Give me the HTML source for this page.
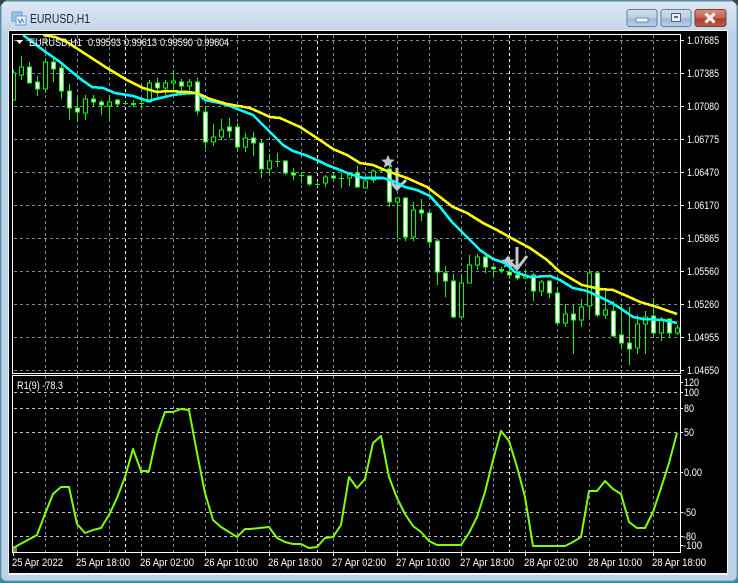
<!DOCTYPE html>
<html><head><meta charset="utf-8"><style>
html,body{margin:0;padding:0;background:#2f8c9c;width:738px;height:583px;overflow:hidden}
svg{display:block}
text{font-family:"Liberation Sans",sans-serif;font-size:11px;fill:#fff}
</style></head><body>
<svg width="738" height="583" viewBox="0 0 738 583" xmlns="http://www.w3.org/2000/svg">
<defs>
<linearGradient id="tb" x1="0" y1="0" x2="0" y2="1"><stop offset="0" stop-color="#dbe7f2"/><stop offset="1" stop-color="#c4d8eb"/></linearGradient>
<linearGradient id="bb" x1="0" y1="0" x2="0" y2="1"><stop offset="0" stop-color="#d5e2ee"/><stop offset=".5" stop-color="#b8cde2"/><stop offset=".55" stop-color="#9db9d6"/><stop offset="1" stop-color="#b7d0e6"/></linearGradient>
<linearGradient id="cb" x1="0" y1="0" x2="0" y2="1"><stop offset="0" stop-color="#d98f80"/><stop offset=".5" stop-color="#c4604f"/><stop offset=".55" stop-color="#ad3a2c"/><stop offset="1" stop-color="#bb5a48"/></linearGradient>
<clipPath id="cm"><rect x="13" y="35" width="667" height="338"/></clipPath>
<clipPath id="ci"><rect x="13" y="376" width="667" height="176"/></clipPath>
</defs>
<rect x="1" y="1" width="736" height="580" rx="5" fill="#b9d2e9" stroke="#7f95a8"/>
<rect x="2" y="2" width="734" height="29" fill="url(#tb)"/>
<path d="M0 0h6L0 6zM738 0h-6l6 6z" fill="#39424a"/>
<!-- icon -->
<rect x="12" y="12" width="10" height="9" fill="#9fc3e8" stroke="#6d9bd0"/>
<rect x="16" y="16" width="10" height="9" fill="#eaf2fb" stroke="#6d9bd0"/>
<path d="M18 19l2 4 2-4 2 4" fill="none" stroke="#4f7fb8"/>
<text x="30" y="23" textLength="60" lengthAdjust="spacingAndGlyphs" style="font-size:13px;fill:#1b2733">EURUSD,H1</text>
<!-- buttons -->
<rect x="627" y="9.5" width="30" height="17" rx="2.5" fill="url(#bb)" stroke="#64809c"/>
<rect x="636" y="18" width="12" height="4" fill="#f2f5f8" stroke="#5b6f84" stroke-width=".7"/>
<rect x="661" y="9.5" width="30" height="17" rx="2.5" fill="url(#bb)" stroke="#64809c"/>
<rect x="671.5" y="13.5" width="9" height="8" fill="#e8eef4" stroke="#4e6176"/>
<rect x="674" y="16" width="4" height="2" fill="#5d7086"/>
<rect x="695" y="9.5" width="31" height="17" rx="2.5" fill="url(#cb)" stroke="#7a3a38"/>
<path d="M705.5 13.5l9 9M714.5 13.5l-9 9" stroke="#f4eeee" stroke-width="3.2"/>
<!-- client -->
<rect x="8" y="30" width="720" height="545" fill="#f3f7fb"/>
<rect x="9" y="31" width="718" height="542" fill="#000"/>
<!-- grid -->
<g shape-rendering="crispEdges" fill="none">
<path stroke="#778899" stroke-dasharray="3 3" d="M14 40.5H680M14 73.5H680M14 106.5H680M14 139.5H680M14 172.5H680M14 205.5H680M14 238.5H680M14 271.5H680M14 304.5H680M14 337.5H680M14 370.5H680"/>
<path stroke="#778899" stroke-dasharray="3 3" d="M45.5 35V373M77.5 35V373M109.5 35V373M141.5 35V373M173.5 35V373M205.5 35V373M237.5 35V373M269.5 35V373M301.5 35V373M333.5 35V373M365.5 35V373M397.5 35V373M429.5 35V373M461.5 35V373M493.5 35V373M525.5 35V373M557.5 35V373M589.5 35V373M621.5 35V373M653.5 35V373M45.5 376V552M77.5 376V552M109.5 376V552M141.5 376V552M173.5 376V552M205.5 376V552M237.5 376V552M269.5 376V552M301.5 376V552M333.5 376V552M365.5 376V552M397.5 376V552M429.5 376V552M461.5 376V552M493.5 376V552M525.5 376V552M557.5 376V552M589.5 376V552M621.5 376V552M653.5 376V552"/>
<path stroke="#ffffff" stroke-dasharray="3 3" d="M125.5 35V373M317.5 35V373M509.5 35V373M125.5 376V552M317.5 376V552M509.5 376V552"/>
<path stroke="#c0c0c0" stroke-dasharray="3 3" d="M14 392.5H680M14 408.5H680M14 432.5H680M14 472.5H680M14 512.5H680M14 536.5H680"/>
</g>
<!-- objects -->
<g fill="#c4c8cc">
<polygon points="388,155 389.9,159.4 394.7,159.8 391,163 392.1,167.7 388,165.2 383.9,167.7 385,163 381.3,159.8 386.1,159.4"/>
<polygon transform="translate(120,100)" points="388,155 389.9,159.4 394.7,159.8 391,163 392.1,167.7 388,165.2 383.9,167.7 385,163 381.3,159.8 386.1,159.4"/>
</g>
<g fill="none" stroke="#c2c8ce" stroke-width="3">
<path d="M397 168V188M390 181L397 189L406 180"/>
<path d="M517 247V268M506 258L517 269L527 256"/>
</g>
<!-- candles -->
<g clip-path="url(#cm)" shape-rendering="crispEdges">
<path fill="none" stroke="#00ff00" d="M13.5 70V100M21.5 56V80M29.5 62V83M37.5 76V96M45.5 58V93M53.5 58V82M61.5 65V99M69.5 84V120M77.5 95V122M85.5 95V120M93.5 95V107M101.5 100V115M109.5 95V120M117.5 99V107M125.5 102V105M133.5 100V107M141.5 100V108M149.5 80V103M157.5 78V97M165.5 80V95M173.5 70V90M181.5 79V90M189.5 79V95M197.5 78V115M205.5 106V148M213.5 124V146M221.5 119V140M229.5 118V138M237.5 123V151M245.5 133V152M253.5 132V156M261.5 140V178M269.5 154V173M277.5 153V167M285.5 160V175M293.5 168V180M301.5 172V183M309.5 176V186M317.5 183V187M325.5 175V187M333.5 172V180M341.5 173V188M349.5 172V186M357.5 166V188M365.5 178V188M373.5 169V183M381.5 167V173M389.5 165V207M397.5 198V238M405.5 197V241M413.5 202V241M421.5 199V221M429.5 212V247M437.5 239V285M445.5 266V297M453.5 274V318M461.5 274V318M469.5 255V283M477.5 254V270M485.5 255V273M493.5 267V277M501.5 267V273M509.5 267V279M517.5 272V280M525.5 270V279M533.5 273V301M541.5 280V296M549.5 280V298M557.5 287V323M565.5 304V327M573.5 305V354M581.5 299V327M589.5 272V319M597.5 272V317M605.5 289V319M613.5 301V337M621.5 304V348M629.5 307V365M637.5 315V354M645.5 311V354M653.5 298V337M661.5 317V341M669.5 318V337M677.5 325V335"/>
<path fill="none" stroke="#00ff00" d="M123 103.5h5M139 103.5h5M275 161.5h5M299 175.5h5M315 184.5h5M339 178.5h5M379 170.5h5M131 103.5h5M131 104.5h5M499 270.5h5M499 269.5h5"/>
<path fill="#fff" stroke="#00ff00" d="M27.5 67h4v16h-4zM35.5 82h4v7h-4zM51.5 62h4v7h-4zM59.5 68h4v23h-4zM67.5 91h4v17h-4zM75.5 108h4v4h-4zM91.5 99h4v3h-4zM99.5 102h4v3h-4zM115.5 100h4v4h-4zM155.5 83h4v5h-4zM179.5 82h4v4h-4zM195.5 82h4v29h-4zM203.5 112h4v30h-4zM227.5 127h4v4h-4zM235.5 127h4v20h-4zM251.5 138h4v5h-4zM259.5 143h4v26h-4zM283.5 161h4v12h-4zM291.5 173h4v2h-4zM307.5 176h4v8h-4zM331.5 176h4v2h-4zM355.5 173h4v14h-4zM387.5 169h4v33h-4zM403.5 198h4v39h-4zM419.5 210h4v3h-4zM427.5 213h4v29h-4zM435.5 241h4v31h-4zM443.5 273h4v8h-4zM451.5 281h4v36h-4zM483.5 257h4v10h-4zM491.5 267h4v2h-4zM507.5 272h4v3h-4zM515.5 275h4v3h-4zM531.5 275h4v16h-4zM547.5 281h4v12h-4zM555.5 293h4v30h-4zM571.5 314h4v6h-4zM595.5 273h4v42h-4zM611.5 311h4v25h-4zM619.5 335h4v8h-4zM627.5 343h4v6h-4zM651.5 316h4v17h-4zM667.5 319h4v14h-4z"/>
<path fill="#000" stroke="#00ff00" d="M11.5 73h4v27h-4zM19.5 67h4v8h-4zM43.5 62h4v27h-4zM83.5 99h4v14h-4zM107.5 102h4v4h-4zM147.5 83h4v19h-4zM163.5 83h4v5h-4zM171.5 81h4v2h-4zM187.5 82h4v4h-4zM211.5 137h4v5h-4zM219.5 130h4v7h-4zM243.5 138h4v9h-4zM267.5 161h4v8h-4zM323.5 177h4v6h-4zM347.5 175h4v3h-4zM363.5 181h4v7h-4zM371.5 171h4v9h-4zM395.5 198h4v4h-4zM411.5 210h4v27h-4zM459.5 283h4v34h-4zM467.5 265h4v18h-4zM475.5 257h4v8h-4zM523.5 276h4v2h-4zM539.5 282h4v9h-4zM563.5 314h4v9h-4zM579.5 307h4v13h-4zM587.5 273h4v33h-4zM603.5 310h4v5h-4zM635.5 324h4v24h-4zM643.5 317h4v7h-4zM659.5 320h4v13h-4zM675.5 328h4v5h-4z"/>
</g>
<!-- MAs -->
<g clip-path="url(#cm)" fill="none" stroke-width="2.6" stroke-linejoin="round" shape-rendering="crispEdges">
<polyline stroke="#00ffff" points="23,35 43,50 60,62 72,72 82,80 92,87 103,88 115,93 133,96 148,101 160,98 173,95 190,93 197,93 205,100 220,103 230,106 240,110 253,115 263,125 273,135 283,145 293,151 305,155 317,160 327,165 340,170 350,174 363,178 383,178 393,181 405,187 417,190 430,196 440,207 452,222 467,237 480,250 493,259 505,263 515,272 530,277 550,276 560,280 573,288 587,291 600,297 610,302 620,308 633,317 643,319 663,320 677,323"/>
<polyline stroke="#ffff00" points="43,35 55,37 67,42 87,55 107,68 127,80 143,88 157,92 167,91 187,92 197,93 210,99 227,104 250,108 270,117 280,118 300,127 317,138 333,149 347,155 360,163 373,165 387,171 407,178 427,187 440,197 453,207 467,213 483,223 497,230 513,239 530,248 547,260 560,272 582,285 600,289 613,290 627,296 640,302 657,307 677,314"/>
</g>
<!-- indicator line -->
<polyline clip-path="url(#ci)" fill="none" stroke="#7fff00" stroke-width="2" stroke-linejoin="round" points="13,548 37,535 45,514 53,494 61,487 69,487 77,524 85,533 93,530 101,528 109,515 117,498 125,477 133,449 141,471 149,471 157,435 165,412 173,412 181,409 189,410 197,453 205,493 213,520 221,527 229,532 237,537 245,529 250,529 269,527 277,538 285,542 293,544 301,544 309,548 317,547 325,538 333,537 341,525 349,477 357,488 365,479 373,443 381,436 389,477 397,498 405,514 413,526 421,532 429,541 437,545 461,545 469,533 477,517 485,492 493,460 501,431 509,441 517,467 525,497 533,546 565,546 573,542 581,537 589,491 597,491 605,481 613,489 621,494 629,522 637,528 645,528 653,512 661,488 669,463 677,433"/>
<path d="M13 549l4-2v5h-4z" fill="#808080"/>
<!-- frames -->
<g shape-rendering="crispEdges" fill="none" stroke="#fff">
<rect x="12.5" y="34.5" width="668" height="339"/>
<rect x="12.5" y="375.5" width="668" height="177"/>
<path d="M681 40.5h3M681 73.5h3M681 106.5h3M681 139.5h3M681 172.5h3M681 205.5h3M681 238.5h3M681 271.5h3M681 304.5h3M681 337.5h3M681 370.5h3M681 382.5h2M681 392.5h2M681 408.5h2M681 432.5h2M681 472.5h2M681 512.5h2M681 536.5h2M681 545.5h2"/>
<path d="M13.5 553v3M77.5 553v3M141.5 553v3M205.5 553v3M269.5 553v3M333.5 553v3M397.5 553v3M461.5 553v3M525.5 553v3M589.5 553v3M653.5 553v3"/>
</g>
<!-- header -->
<path d="M16 40h7l-3.5 4z" fill="#fff"/>
<text x="29" y="46" textLength="53" lengthAdjust="spacingAndGlyphs">EURUSD,H1</text>
<text x="88" y="46" textLength="33" lengthAdjust="spacingAndGlyphs">0.99593</text>
<text x="124" y="46" textLength="33" lengthAdjust="spacingAndGlyphs">0.99613</text>
<text x="160" y="46" textLength="33" lengthAdjust="spacingAndGlyphs">0.99590</text>
<text x="197" y="46" textLength="32" lengthAdjust="spacingAndGlyphs">0.99604</text>
<text x="17" y="389" textLength="46" lengthAdjust="spacingAndGlyphs">R1(9) -78.3</text>
<!-- right labels -->
<text x="687" y="44" textLength="32" lengthAdjust="spacingAndGlyphs">1.07685</text>
<text x="687" y="77" textLength="32" lengthAdjust="spacingAndGlyphs">1.07385</text>
<text x="687" y="110" textLength="32" lengthAdjust="spacingAndGlyphs">1.07080</text>
<text x="687" y="143" textLength="32" lengthAdjust="spacingAndGlyphs">1.06775</text>
<text x="687" y="176" textLength="32" lengthAdjust="spacingAndGlyphs">1.06470</text>
<text x="687" y="209" textLength="32" lengthAdjust="spacingAndGlyphs">1.06170</text>
<text x="687" y="242" textLength="32" lengthAdjust="spacingAndGlyphs">1.05865</text>
<text x="687" y="275" textLength="32" lengthAdjust="spacingAndGlyphs">1.05560</text>
<text x="687" y="308" textLength="32" lengthAdjust="spacingAndGlyphs">1.05260</text>
<text x="687" y="341" textLength="32" lengthAdjust="spacingAndGlyphs">1.04955</text>
<text x="687" y="374" textLength="32" lengthAdjust="spacingAndGlyphs">1.04650</text>
<text x="684" y="386" textLength="15" lengthAdjust="spacingAndGlyphs">120</text>
<text x="684" y="396" textLength="15" lengthAdjust="spacingAndGlyphs">100</text>
<text x="684" y="412" textLength="10" lengthAdjust="spacingAndGlyphs">80</text>
<text x="684" y="436" textLength="10" lengthAdjust="spacingAndGlyphs">50</text>
<text x="684" y="476" textLength="18" lengthAdjust="spacingAndGlyphs">0.00</text>
<text x="683" y="516" textLength="13" lengthAdjust="spacingAndGlyphs">-50</text>
<text x="683" y="540" textLength="13" lengthAdjust="spacingAndGlyphs">-80</text>
<text x="683" y="549" textLength="19" lengthAdjust="spacingAndGlyphs">-100</text>
<!-- bottom labels -->
<text x="12" y="566" textLength="51" lengthAdjust="spacingAndGlyphs">25 Apr 2022</text>
<text x="76" y="566" textLength="54" lengthAdjust="spacingAndGlyphs">25 Apr 18:00</text>
<text x="140" y="566" textLength="54" lengthAdjust="spacingAndGlyphs">26 Apr 02:00</text>
<text x="204" y="566" textLength="54" lengthAdjust="spacingAndGlyphs">26 Apr 10:00</text>
<text x="268" y="566" textLength="54" lengthAdjust="spacingAndGlyphs">26 Apr 18:00</text>
<text x="332" y="566" textLength="54" lengthAdjust="spacingAndGlyphs">27 Apr 02:00</text>
<text x="396" y="566" textLength="54" lengthAdjust="spacingAndGlyphs">27 Apr 10:00</text>
<text x="460" y="566" textLength="54" lengthAdjust="spacingAndGlyphs">27 Apr 18:00</text>
<text x="524" y="566" textLength="54" lengthAdjust="spacingAndGlyphs">28 Apr 02:00</text>
<text x="588" y="566" textLength="54" lengthAdjust="spacingAndGlyphs">28 Apr 10:00</text>
<text x="652" y="566" textLength="54" lengthAdjust="spacingAndGlyphs">28 Apr 18:00</text>
</svg>
</body></html>
